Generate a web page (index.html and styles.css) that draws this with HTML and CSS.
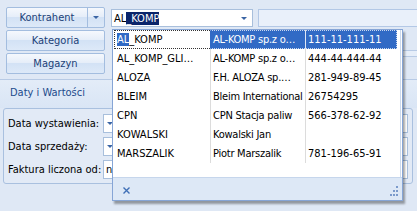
FILE: index.html
```html
<!DOCTYPE html>
<html>
<head>
<meta charset="utf-8">
<link rel="stylesheet" href="styles.css">
</head>
<body>
<div class="screen">
  <div class="top-panel">
    <div class="btn-col">
      <div class="btn split">
        <span class="btn-main">Kontrahent</span>
        <span class="btn-arrow"><i class="tri"></i></span>
      </div>
      <div class="btn">Kategoria</div>
      <div class="btn">Magazyn</div>
    </div>
    <div class="search-col">
      <div class="search-row">
        <div class="combo">
          <span class="combo-text">AL<span class="sel-dark">_KOMP</span></span>
          <i class="tri"></i>
        </div>
        <div class="field-disabled"></div>
      </div>
      <div class="strip"></div>
    </div>
  </div>
  <div class="tab-header"><span class="tab-title">Daty i Wartości</span></div>
  <div class="group">
    <div class="form-row">
      <span class="label">Data wystawienia:</span>
      <div class="input"><i class="tri"></i></div>
    </div>
    <div class="form-row">
      <span class="label">Data sprzedaży:</span>
      <div class="input"><i class="tri"></i></div>
    </div>
    <div class="form-row">
      <span class="label">Faktura liczona od:</span>
      <div class="input"><span class="input-text">n</span></div>
    </div>
  </div>

  <div class="popup">
    <div class="list">
      <div class="row focused">
        <span class="cell c1"><span class="sel-blue">AL</span>_KOMP</span>
        <span class="cell c2">AL-KOMP sp.z o…</span>
        <span class="cell c3">111-11-111-11</span>
      </div>
      <div class="row">
        <span class="cell c1">AL_KOMP_GLI…</span>
        <span class="cell c2">AL-KOMP sp.z o…</span>
        <span class="cell c3">444-44-444-44</span>
      </div>
      <div class="row">
        <span class="cell c1">ALOZA</span>
        <span class="cell c2">F.H. ALOZA sp.…</span>
        <span class="cell c3">281-949-89-45</span>
      </div>
      <div class="row">
        <span class="cell c1">BLEIM</span>
        <span class="cell c2">Bleim International</span>
        <span class="cell c3">26754295</span>
      </div>
      <div class="row">
        <span class="cell c1">CPN</span>
        <span class="cell c2">CPN Stacja paliw</span>
        <span class="cell c3">566-378-62-92</span>
      </div>
      <div class="row">
        <span class="cell c1">KOWALSKI</span>
        <span class="cell c2">Kowalski Jan</span>
        <span class="cell c3"></span>
      </div>
      <div class="row">
        <span class="cell c1">MARSZALIK</span>
        <span class="cell c2">Piotr Marszalik</span>
        <span class="cell c3">781-196-65-91</span>
      </div>
    </div>
    <div class="footer">
      <svg class="close" width="7" height="7" viewBox="0 0 7 7"><path d="M0.5 0.5L6.5 6.5M6.5 0.5L0.5 6.5" stroke="#3f6fb6" stroke-width="1.4"/></svg>
      <svg class="grip" width="10" height="10" viewBox="0 0 10 10">
        <rect x="8" y="0" width="2" height="2" fill="#7b9acb"/>
        <rect x="5" y="4" width="2" height="2" fill="#7b9acb"/>
        <rect x="8" y="4" width="2" height="2" fill="#7b9acb"/>
        <rect x="2" y="8" width="2" height="2" fill="#7b9acb"/>
        <rect x="5" y="8" width="2" height="2" fill="#7b9acb"/>
        <rect x="8" y="8" width="2" height="2" fill="#7b9acb"/>
      </svg>
    </div>
  </div>
</div>
</body>
</html>
```
FILE: styles.css
```css
* { box-sizing: border-box; }
body {
  margin: 0;
  background: #dfe8f5;
  font-family: "DejaVu Sans Condensed", "DejaVu Sans", sans-serif;
  font-size: 11px;
  color: #000;
}
.screen {
  position: relative;
  width: 417px;
  height: 211px;
  overflow: hidden;
}
.top-panel {
  height: 84px;
  display: flex;
  gap: 6px;
  padding: 7px 0 0 6px;
  border-top: 4px solid #e9f0fa;
  border-bottom: 1px solid #b7cae5;
  margin-top: -4px;
  padding-top: 7px;
}
.btn-col {
  width: 99px;
  display: flex;
  flex-direction: column;
  gap: 2px;
}
.btn {
  height: 21px;
  border: 1px solid #a3bddf;
  border-radius: 2px;
  background: linear-gradient(#f5f8fd 0%, #e6eef9 45%, #d3e2f5 50%, #dde9f8 100%);
  color: #1b3f78;
  display: flex;
  align-items: center;
  justify-content: center;
}
.btn.split { justify-content: flex-start; }
.btn-main {
  flex: 1;
  text-align: center;
  height: 100%;
  line-height: 19px;
  border-right: 1px solid #a3bddf;
}
.btn-arrow {
  width: 16px;
  height: 100%;
  display: flex;
  align-items: center;
  justify-content: center;
}
.tri {
  display: inline-block;
  width: 0;
  height: 0;
  border-left: 3px solid transparent;
  border-right: 3px solid transparent;
  border-top: 3px solid #3a64a4;
}
.search-col {
  flex: 1;
  display: flex;
  flex-direction: column;
}
.search-row {
  display: flex;
  gap: 5px;
  margin-top: 2px;
}
.combo {
  width: 142px;
  height: 18px;
  background: #fff;
  border: 1px solid #a8bfdc;
  display: flex;
  align-items: center;
  padding: 0 5px 0 2px;
}
.combo-text { flex: 1; }
.sel-dark { background: #0a246a; color: #fff; }
.field-disabled {
  flex: 1;
  height: 18px;
  background: #e9f0fa;
  border: 1px solid #b3c8e6;
  border-right: none;
}
.strip {
  margin-top: 23px;
  margin-left: 147px;
  height: 7px;
  border-top: 1px solid #b7cae5;
  border-bottom: 1px solid #b7cae5;
  background: #e6eef9;
}
.tab-header {
  height: 28px;
  padding: 6px 0 0 10px;
  background: linear-gradient(#e3ecf8, #d9e5f5);
}
.tab-title { color: #1d4b8c; }
.group {
  margin: 0 4px 0 3px;
  height: 76px;
  border: 1px solid #a9c0df;
  border-radius: 3px;
  background: #e2eaf6;
  padding: 4px 4px 0 4px;
  display: flex;
  flex-direction: column;
  gap: 3px;
}
.form-row {
  display: flex;
  height: 20px;
  align-items: center;
}
.label { width: 95px; }
.input {
  flex: 1;
  height: 19px;
  background: #fff;
  border: 1px solid #a8bfdc;
  display: flex;
  align-items: center;
  padding-left: 2px;
}
.input .tri { margin-left: 1px; }
.input-text { padding-left: 0; }

.popup {
  position: absolute;
  left: 112px;
  top: 29px;
  width: 291px;
  height: 172px;
  border: 1px solid #86a5d6;
  background: #fff;
  box-shadow: 2px 3px 2px rgba(0, 0, 0, 0.35);
  display: flex;
  flex-direction: column;
}
.list {
  height: 147px;
  padding: 0 3px 0 1px;
  border-right: 1px solid #ccd9ec;
  margin-right: 1px;
}
.row {
  height: 19px;
  display: flex;
  line-height: 19px;
}
.cell {
  white-space: nowrap;
  overflow: hidden;
  padding-left: 3px;
}
.c1 { width: 96px; }
.c2 { width: 95px; border-left: 1px solid #dcdcdc; padding-left: 2px; letter-spacing: -0.25px; }
.c3 { flex: 1; border-left: 1px solid #dcdcdc; padding-left: 2px; }
.focused .c1 {
  border: 1px dotted #333;
  border-right: none;
  line-height: 17px;
  padding-left: 2px;
}
.focused .c2, .focused .c3 {
  background: #316ac5;
  color: #fff;
  border-top: 1px dotted #c8d6ee;
  border-bottom: 1px dotted #c8d6ee;
  line-height: 17px;
}
.focused .c2 { border-left: 1px solid #316ac5; }
.focused .c3 { border-left: 1px solid #dfe6f3; border-right: 1px dotted #c8d6ee; }
.sel-blue { background: #316ac5; color: #fff; }
.footer {
  flex: 1;
  background: #dde8f6;
  border-top: 1px solid #c6d6ec;
  display: flex;
  align-items: center;
  justify-content: space-between;
  padding: 0 4px 0 10px;
}
.close { margin-top: 2px; }
.grip { margin-top: 4px; }
```
